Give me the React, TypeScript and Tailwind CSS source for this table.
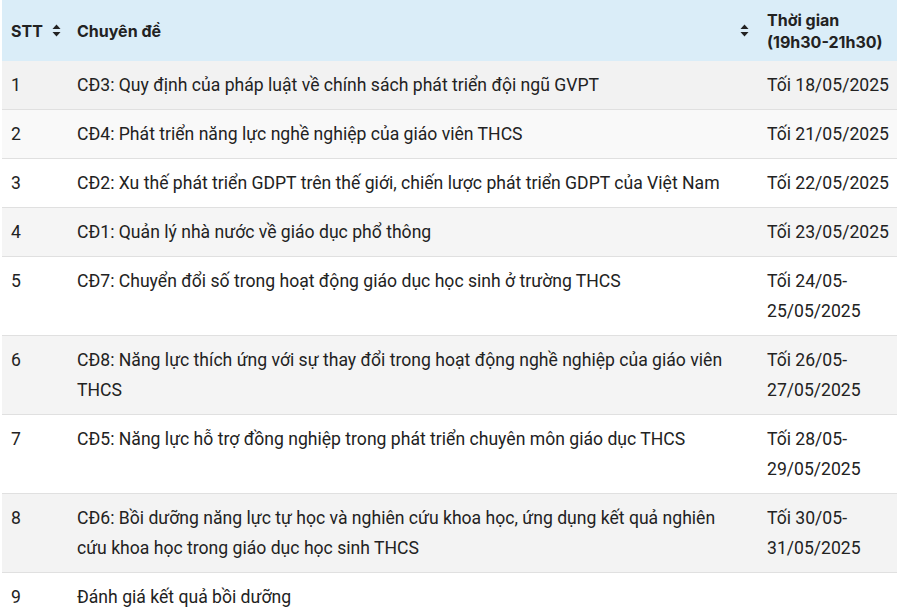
const rows: { stt: string; topic: string; time: string; bg: string }[] = [
  { stt: "1", topic: "CĐ3: Quy định của pháp luật về chính sách phát triển đội ngũ GVPT", time: "Tối 18/05/2025", bg: "bg-[#f2f2f2]" },
  { stt: "2", topic: "CĐ4: Phát triển năng lực nghề nghiệp của giáo viên THCS", time: "Tối 21/05/2025", bg: "bg-[#f9f9f9]" },
  { stt: "3", topic: "CĐ2: Xu thế phát triển GDPT trên thế giới, chiến lược phát triển GDPT của Việt Nam", time: "Tối 22/05/2025", bg: "bg-white" },
  { stt: "4", topic: "CĐ1: Quản lý nhà nước về giáo dục phổ thông", time: "Tối 23/05/2025", bg: "bg-[#f5f5f5]" },
  { stt: "5", topic: "CĐ7: Chuyển đổi số trong hoạt động giáo dục học sinh ở trường THCS", time: "Tối 24/05-25/05/2025", bg: "bg-white" },
  { stt: "6", topic: "CĐ8: Năng lực thích ứng với sự thay đổi trong hoạt động nghề nghiệp của giáo viên THCS", time: "Tối 26/05-27/05/2025", bg: "bg-[#f4f4f4]" },
  { stt: "7", topic: "CĐ5: Năng lực hỗ trợ đồng nghiệp trong phát triển chuyên môn giáo dục THCS", time: "Tối 28/05-29/05/2025", bg: "bg-white" },
  { stt: "8", topic: "CĐ6: Bồi dưỡng năng lực tự học và nghiên cứu khoa học, ứng dụng kết quả nghiên cứu khoa học trong giáo dục học sinh THCS", time: "Tối 30/05-31/05/2025", bg: "bg-[#f3f3f3]" },
  { stt: "9", topic: "Đánh giá kết quả bồi dưỡng", time: "", bg: "bg-white" },
];

const SortIcon = () => (
  <svg width="9" height="13" viewBox="0 0 9 13" className="shrink-0">
    <path d="M4.5 0.5 L8.5 5 H0.5 Z" fill="#222" />
    <path d="M4.5 12.5 L8.5 8 H0.5 Z" fill="#222" />
  </svg>
);

export default function App() {
  return (
    <div className="bg-white w-[900px] h-[611px] overflow-hidden px-[2px]">
      <table className="w-[895px] table-fixed border-collapse text-[#222]">
        <colgroup>
          <col className="w-[65px]" />
          <col className="w-[690px]" />
          <col className="w-[140px]" />
        </colgroup>
        <thead>
          <tr className="bg-[#daedf8] h-[61px] font-['Inter',sans-serif] font-semibold text-[16px] leading-[22px]">
            <th className="pl-[9px] pr-[6px] text-left align-middle">
              <div className="flex items-center justify-between">
                <span>STT</span>
                <SortIcon />
              </div>
            </th>
            <th className="pl-[10px] pr-[8px] text-left align-middle">
              <div className="flex items-center justify-between">
                <span>Chuyên đề</span>
                <SortIcon />
              </div>
            </th>
            <th className="pl-[10px] pr-[6px] text-left align-middle">
              Thời gian
              <br />
              (19h30-21h30)
            </th>
          </tr>
        </thead>
        <tbody className="font-['Roboto',sans-serif] text-[17.6px] leading-[30px]">
          {rows.map((r) => (
            <tr key={r.stt} className={`border-b border-[#e0e0e0] ${r.bg}`}>
              <td className="pl-[9px] py-[9px] align-top">{r.stt}</td>
              <td className="pl-[10px] pr-[10px] py-[9px] align-top">{r.topic}</td>
              <td className="pl-[10px] pr-[4px] py-[9px] align-top">{r.time}</td>
            </tr>
          ))}
        </tbody>
      </table>
    </div>
  );
}
